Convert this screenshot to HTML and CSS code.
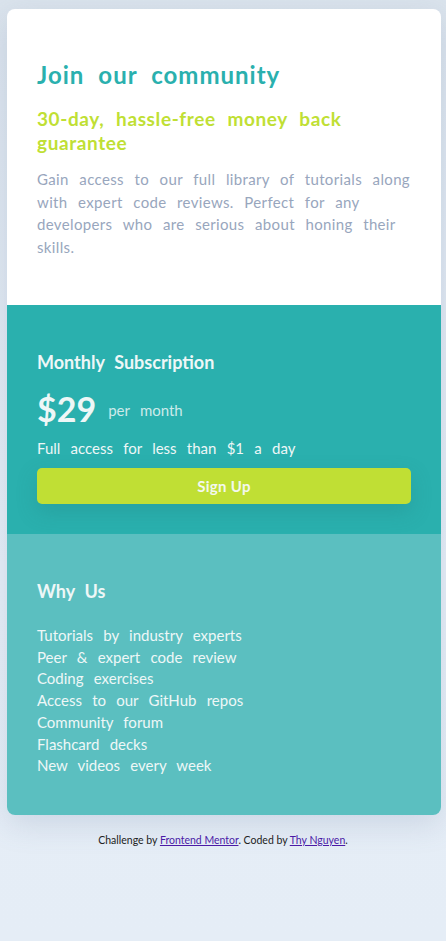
FILE: index.html
```html
<!DOCTYPE html>
<html lang="en">
<head>
<meta charset="utf-8">
<title>Single price grid</title>
<link rel="stylesheet" href="styles.css">
</head>
<body>
<main class="card">
  <section class="intro">
    <h1 class="title">Join our community</h1>
    <h2 class="subtitle">30-day, hassle-free money back guarantee</h2>
    <p class="desc">Gain access to our full library of tutorials along with expert code reviews. Perfect for any developers who are serious about honing their skills.</p>
  </section>
  <section class="sub">
    <h3 class="sub-title">Monthly Subscription</h3>
    <div class="price"><span class="amount">$29</span><span class="per">per month</span></div>
    <p class="access">Full access for less than $1 a day</p>
    <button class="btn">Sign Up</button>
  </section>
  <section class="why">
    <h3 class="why-title">Why Us</h3>
    <ul class="list">
      <li>Tutorials by industry experts</li>
      <li>Peer &amp; expert code review</li>
      <li>Coding exercises</li>
      <li>Access to our GitHub repos</li>
      <li>Community forum</li>
      <li>Flashcard decks</li>
      <li>New videos every week</li>
    </ul>
  </section>
</main>
<footer class="attribution">Challenge by <a href="#">Frontend Mentor</a>. Coded by <a href="#">Thy Nguyen</a>.</footer>
</body>
</html>
```
FILE: styles.css
```css
* { box-sizing: border-box; }
html, body { margin: 0; }
body {
  min-height: 941px;
  padding-top: 9px;
  background: linear-gradient(#dae3ec, #e6eef7 60%, #e5edf6);
  font-family: Lato, "Liberation Sans", sans-serif;
  word-spacing: 0.4em;
}
.card {
  width: 434px;
  margin: 0 7px;
  border-radius: 8px;
  overflow: hidden;
  box-shadow: 0 10px 30px rgba(90, 110, 150, 0.18);
}
.intro {
  background: #fff;
  height: 296px;
  padding: 52px 30px 0;
}
.title {
  margin: 0;
  font-size: 24px;
  line-height: 28px;
  font-weight: 700;
  letter-spacing: 1px;
  word-spacing: 0.3em;
  color: #2ab0ae;
}
.subtitle {
  margin: 18px 0 0;
  font-size: 19px;
  line-height: 24px;
  font-weight: 700;
  letter-spacing: 0.6px;
  word-spacing: 0.35em;
  color: #c0df34;
}
.desc {
  margin: 13px 0 0;
  font-size: 15px;
  line-height: 22.7px;
  color: #98a6bd;
  letter-spacing: 0.35px;
}
.sub {
  background: #2ab0ae;
  height: 229px;
  padding: 46px 30px 0;
  color: #eef7f7;
}
.sub-title {
  margin: 0;
  font-size: 18px;
  line-height: 22px;
  font-weight: 700;
  word-spacing: 0.3em;
}
.price {
  display: flex;
  align-items: center;
  gap: 12px;
  margin-top: 16px;
}
.amount {
  font-size: 34px;
  line-height: 40px;
  font-weight: 700;
}
.per {
  font-size: 15px;
  color: #cdeaea;
  margin-top: 2px;
}
.access {
  margin: 9px 0 0;
  font-size: 15px;
  line-height: 20px;
}
.btn {
  display: block;
  width: 100%;
  height: 36px;
  margin-top: 10px;
  border: 0;
  border-radius: 5px;
  background: #c0df34;
  color: #f3f8f0;
  font-family: inherit;
  font-size: 15px;
  font-weight: 700;
  letter-spacing: 0.3px;
  word-spacing: normal;
  box-shadow: 0 8px 20px rgba(30, 120, 120, 0.25);
}
.why {
  background: #5bbfc0;
  height: 281px;
  padding: 46px 30px 0;
  color: #eef7f7;
}
.why-title {
  margin: 0;
  font-size: 18px;
  line-height: 22px;
  font-weight: 700;
  word-spacing: 0.3em;
}
.list {
  list-style: none;
  margin: 23px 0 0;
  padding: 0;
  font-size: 15px;
  line-height: 21.7px;
}
.attribution {
  margin-top: 19px;
  text-align: center;
  font-size: 10.5px;
  color: #222;
  word-spacing: normal;
}
.attribution a { color: #4b1aa6; }
```
